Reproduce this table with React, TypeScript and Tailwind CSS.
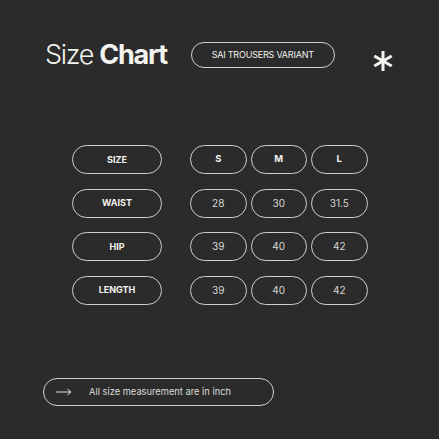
const labels = ["SIZE", "WAIST", "HIP", "LENGTH"]
const values = [
  ["S", "M", "L"],
  ["28", "30", "31.5"],
  ["39", "40", "42"],
  ["39", "40", "42"],
]

function Asterisk() {
  return (
    <svg width="22" height="22" viewBox="0 0 22 22" className="text-[#f4f4f0]">
      <g stroke="currentColor" strokeWidth="3" strokeLinecap="butt">
        <line x1="11" y1="1" x2="11" y2="21" />
        <line x1="2.3" y1="6" x2="19.7" y2="16" />
        <line x1="2.3" y1="16" x2="19.7" y2="6" />
      </g>
    </svg>
  )
}

export default function App() {
  return (
    <div className="w-[439px] h-[439px] bg-[#2b2b2b] text-[#f2f2ee] font-['Inter','Liberation_Sans',sans-serif] flex flex-col">
      <div className="flex items-center pl-[45px] pt-[37px]">
        <h1 className="text-[27px] leading-none tracking-[-1.3px] font-light">
          Size <span className="font-bold">Chart</span>
        </h1>
        <div className="ml-[24px] w-[144px] h-[26px] rounded-full border-[1.5px] border-[#cfcfcb] flex items-center justify-center text-[9px] tracking-[-0.2px]">
          SAI TROUSERS VARIANT
        </div>
        <div className="ml-[37px] mt-[13px]">
          <Asterisk />
        </div>
      </div>

      <div className="flex flex-col gap-[14.5px] pl-[72px] mt-[73px]">
        {labels.map((label, i) => (
          <div key={label} className="flex items-center">
            <div className="w-[90px] h-[29px] rounded-full border-[1.5px] border-[#cfcfcb] flex items-center justify-center text-[9px] font-bold">
              {label}
            </div>
            <div className="flex gap-[4px] ml-[28px]">
              {values[i].map((v, j) => (
                <div
                  key={j}
                  className={`w-[56.5px] h-[29px] rounded-full border-[1.5px] border-[#cfcfcb] flex items-center justify-center ${
                    i === 0 ? "font-bold text-[9.5px]" : "text-[10px] text-[#d8d8d4]"
                  }`}
                >
                  {v}
                </div>
              ))}
            </div>
          </div>
        ))}
      </div>

      <div className="ml-[43px] mt-[73px] w-[231px] h-[28px] rounded-full border-[1.5px] border-[#cfcfcb] flex items-center">
        <svg width="16" height="8" viewBox="0 0 16 8" className="ml-[12px] text-[#e0e0dc]">
          <path d="M0 4H15M11.5 1L15 4L11.5 7" fill="none" stroke="currentColor" strokeWidth="1" />
        </svg>
        <span className="ml-[17px] text-[9.3px] text-[#dcdcd8]">All size measurement are in inch</span>
      </div>
    </div>
  )
}
